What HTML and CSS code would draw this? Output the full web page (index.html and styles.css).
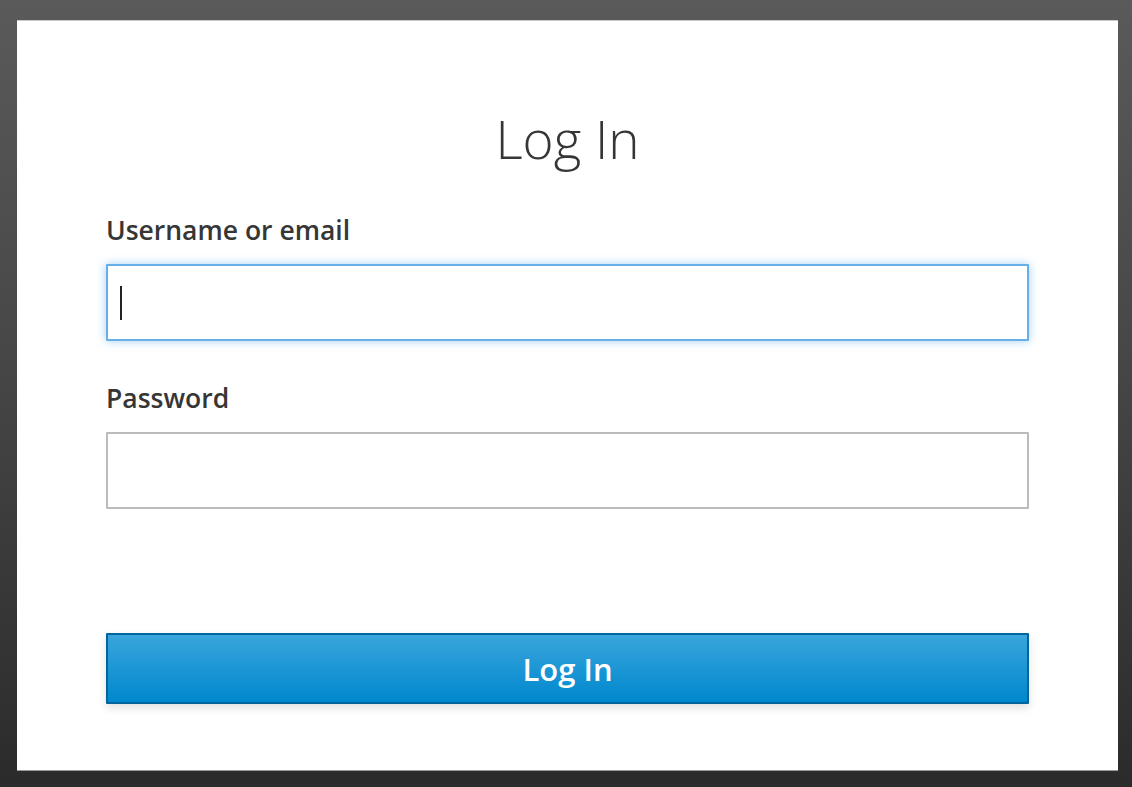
FILE: index.html
```html
<!DOCTYPE html>
<html lang="en">
<head>
<meta charset="utf-8">
<title>Log In</title>
<link rel="stylesheet" href="styles.css">
</head>
<body>
<div class="page">
  <main class="card">
    <h1 class="title">Log In</h1>
    <form class="form">
      <div class="group">
        <label class="label" for="username">Username or email</label>
        <div class="field-wrap">
          <input class="field field-focus" id="username" type="text">
          <span class="caret"></span>
        </div>
      </div>
      <div class="group">
        <label class="label" for="password">Password</label>
        <input class="field" id="password" type="password">
      </div>
      <button class="btn" type="button">Log In</button>
    </form>
  </main>
</div>
</body>
</html>
```

FILE: styles.css
```css
html, body {
  margin: 0;
  padding: 0;
  height: 100%;
}
body {
  font-family: "Open Sans", "Liberation Sans", sans-serif;
  color: #363636;
  background: linear-gradient(180deg, #5a5a5a 0%, #474747 45%, #2b2b2b 100%);
  overflow: hidden;
}
.page {
  width: 1132px;
  height: 787px;
  box-sizing: border-box;
  padding: 20px 14px 16px 17px;
}
.card {
  box-sizing: border-box;
  width: 1101px;
  height: 751px;
  background: #fff;
  border-top: 1px solid #c8c8c8;
  border-bottom: 1px solid #9a9a9a;
  padding: 0 89px;
  display: flex;
  flex-direction: column;
}
.title {
  margin: 88px 0 0;
  font-weight: 300;
  font-size: 53px;
  line-height: 60px;
  text-align: center;
  color: #363636;
}
.form {
  display: flex;
  flex-direction: column;
  margin-top: 44px;
}
.group {
  display: flex;
  flex-direction: column;
  margin-bottom: 40px;
}
.label {
  font-weight: 600;
  font-size: 26.5px;
  line-height: 34px;
  margin-bottom: 17px;
  color: #363636;
}
.field-wrap {
  position: relative;
}
.field {
  box-sizing: border-box;
  width: 100%;
  height: 77px;
  border: 2px solid #bbbbbb;
  border-radius: 1px;
  background: #fff;
  outline: none;
  margin: 0;
  font: inherit;
  padding: 0 14px;
}
.field-focus {
  border-color: #66afe9;
  box-shadow: 0 0 10px rgba(102, 175, 233, 0.6);
}
.caret {
  position: absolute;
  left: 14px;
  top: 22px;
  width: 2px;
  height: 34px;
  background: #222;
}
.btn {
  margin-top: 84px;
  box-sizing: border-box;
  height: 71px;
  width: 100%;
  border: 2px solid #00659c;
  border-radius: 1px;
  background: linear-gradient(180deg, #39a5dc 0%, #0088ce 100%);
  color: #fff;
  font-family: "Open Sans", "Liberation Sans", sans-serif;
  font-weight: 600;
  font-size: 31px;
  box-shadow: 0 4px 8px rgba(0, 0, 0, 0.12);
  padding: 0;
}
```
